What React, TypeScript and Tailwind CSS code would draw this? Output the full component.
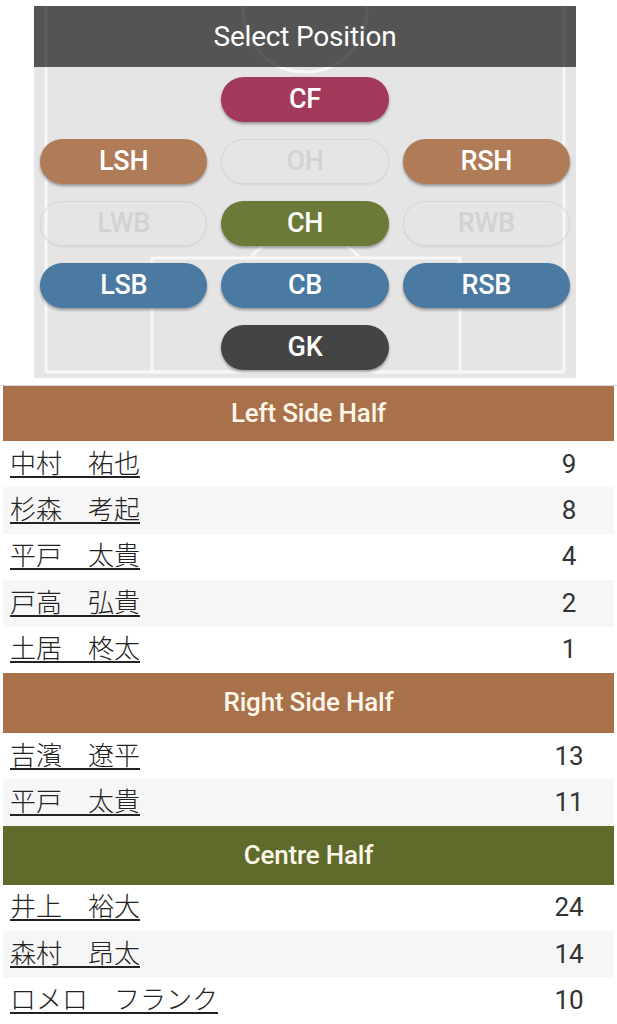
import React from "react";

type Pos = { label: string; bg?: string };

const rows: (Pos | null)[][] = [
  [null, { label: "CF", bg: "bg-[#a33a5b]" }, null],
  [{ label: "LSH", bg: "bg-[#b07b57]" }, { label: "OH" }, { label: "RSH", bg: "bg-[#b07b57]" }],
  [{ label: "LWB" }, { label: "CH", bg: "bg-[#6b7a37]" }, { label: "RWB" }],
  [{ label: "LSB", bg: "bg-[#4a79a1]" }, { label: "CB", bg: "bg-[#4a79a1]" }, { label: "RSB", bg: "bg-[#4a79a1]" }],
  [null, { label: "GK", bg: "bg-[#444444]" }, null],
];

const groups = [
  {
    title: "Left Side Half",
    bg: "bg-[#a8714a]",
    h: "h-[55px]",
    players: [
      ["中村　祐也", "9"],
      ["杉森　考起", "8"],
      ["平戸　太貴", "4"],
      ["戸高　弘貴", "2"],
      ["土居　柊太", "1"],
    ],
  },
  {
    title: "Right Side Half",
    bg: "bg-[#a8714a]",
    h: "h-[60px]",
    players: [
      ["吉濱　遼平", "13"],
      ["平戸　太貴", "11"],
    ],
  },
  {
    title: "Centre Half",
    bg: "bg-[#5e6b2b]",
    h: "h-[59px]",
    players: [
      ["井上　裕大", "24"],
      ["森村　昂太", "14"],
      ["ロメロ　フランク", "10"],
    ],
  },
];

function PosButton({ p }: { p: Pos | null }) {
  if (!p) return <div className="h-[45px]" />;
  if (!p.bg) {
    return (
      <div className="h-[45px] rounded-full border border-[#d6d6d6] shadow-[0_1px_2px_rgba(0,0,0,0.08)] flex items-center justify-center text-[27px] font-medium tracking-[-0.3px] text-[#d2d2d2]">
        {p.label}
      </div>
    );
  }
  return (
    <div
      className={`h-[45px] rounded-full ${p.bg} shadow-[0_2px_3px_rgba(0,0,0,0.35)] flex items-center justify-center text-[27px] font-medium tracking-[-0.3px] text-white`}
    >
      {p.label}
    </div>
  );
}

export default function App() {
  return (
    <div className="w-[617px] h-[1024px] overflow-hidden bg-white font-['Roboto',sans-serif]">
      <div className="pt-[6px] pl-[34px]">
        <div className="relative w-[542px] h-[372px] bg-[#e5e5e5] overflow-hidden">
          <svg className="absolute inset-0" width="542" height="372" viewBox="0 0 542 372">
            <g fill="none" stroke="#f7f7f7" strokeWidth="3">
              <line x1="12" y1="0" x2="12" y2="366" />
              <line x1="530" y1="0" x2="530" y2="366" />
              <line x1="12" y1="366" x2="530" y2="366" />
              <circle cx="271" cy="4" r="62" />
              <rect x="118" y="252" width="308" height="114" />
              <path d="M216 252 A71 71 0 0 1 326 252" />
            </g>
          </svg>
          <div className="relative h-[61px] bg-[rgba(0,0,0,0.63)] flex items-center justify-center text-white text-[28px] tracking-[-0.2px]">
            Select Position
          </div>
          <div className="relative mt-[10px] px-[6px] flex flex-col gap-[17px]">
            {rows.map((r, i) => (
              <div key={i} className="grid grid-cols-3 gap-[14px]">
                {r.map((p, j) => (
                  <PosButton key={j} p={p} />
                ))}
              </div>
            ))}
          </div>
        </div>
      </div>
      <div className="mt-[7px] h-px bg-[#d3d8de]" />
      <div className="mx-[3px]">
        {groups.map((g) => (
          <div key={g.title}>
            <div className={`${g.h} ${g.bg} flex items-center justify-center text-[26px] font-medium tracking-[-0.2px] text-[#fff6ea]`}>
              {g.title}
            </div>
            {g.players.map(([name, num], i) => (
              <div
                key={i}
                className={`h-[46.4px] flex items-center ${i % 2 === 1 ? "bg-[#f6f6f6]" : "bg-white"}`}
              >
                <span className="pl-[7px] flex-1 pb-[5px] leading-none text-[26px] font-light text-[#222] font-['Noto_Sans_CJK_JP',sans-serif]">
                  <span className="underline underline-offset-[3px] decoration-[1.5px]">{name}</span>
                </span>
                <span className="w-[90px] text-center text-[26px] text-[#333]">{num}</span>
              </div>
            ))}
          </div>
        ))}
      </div>
    </div>
  );
}
